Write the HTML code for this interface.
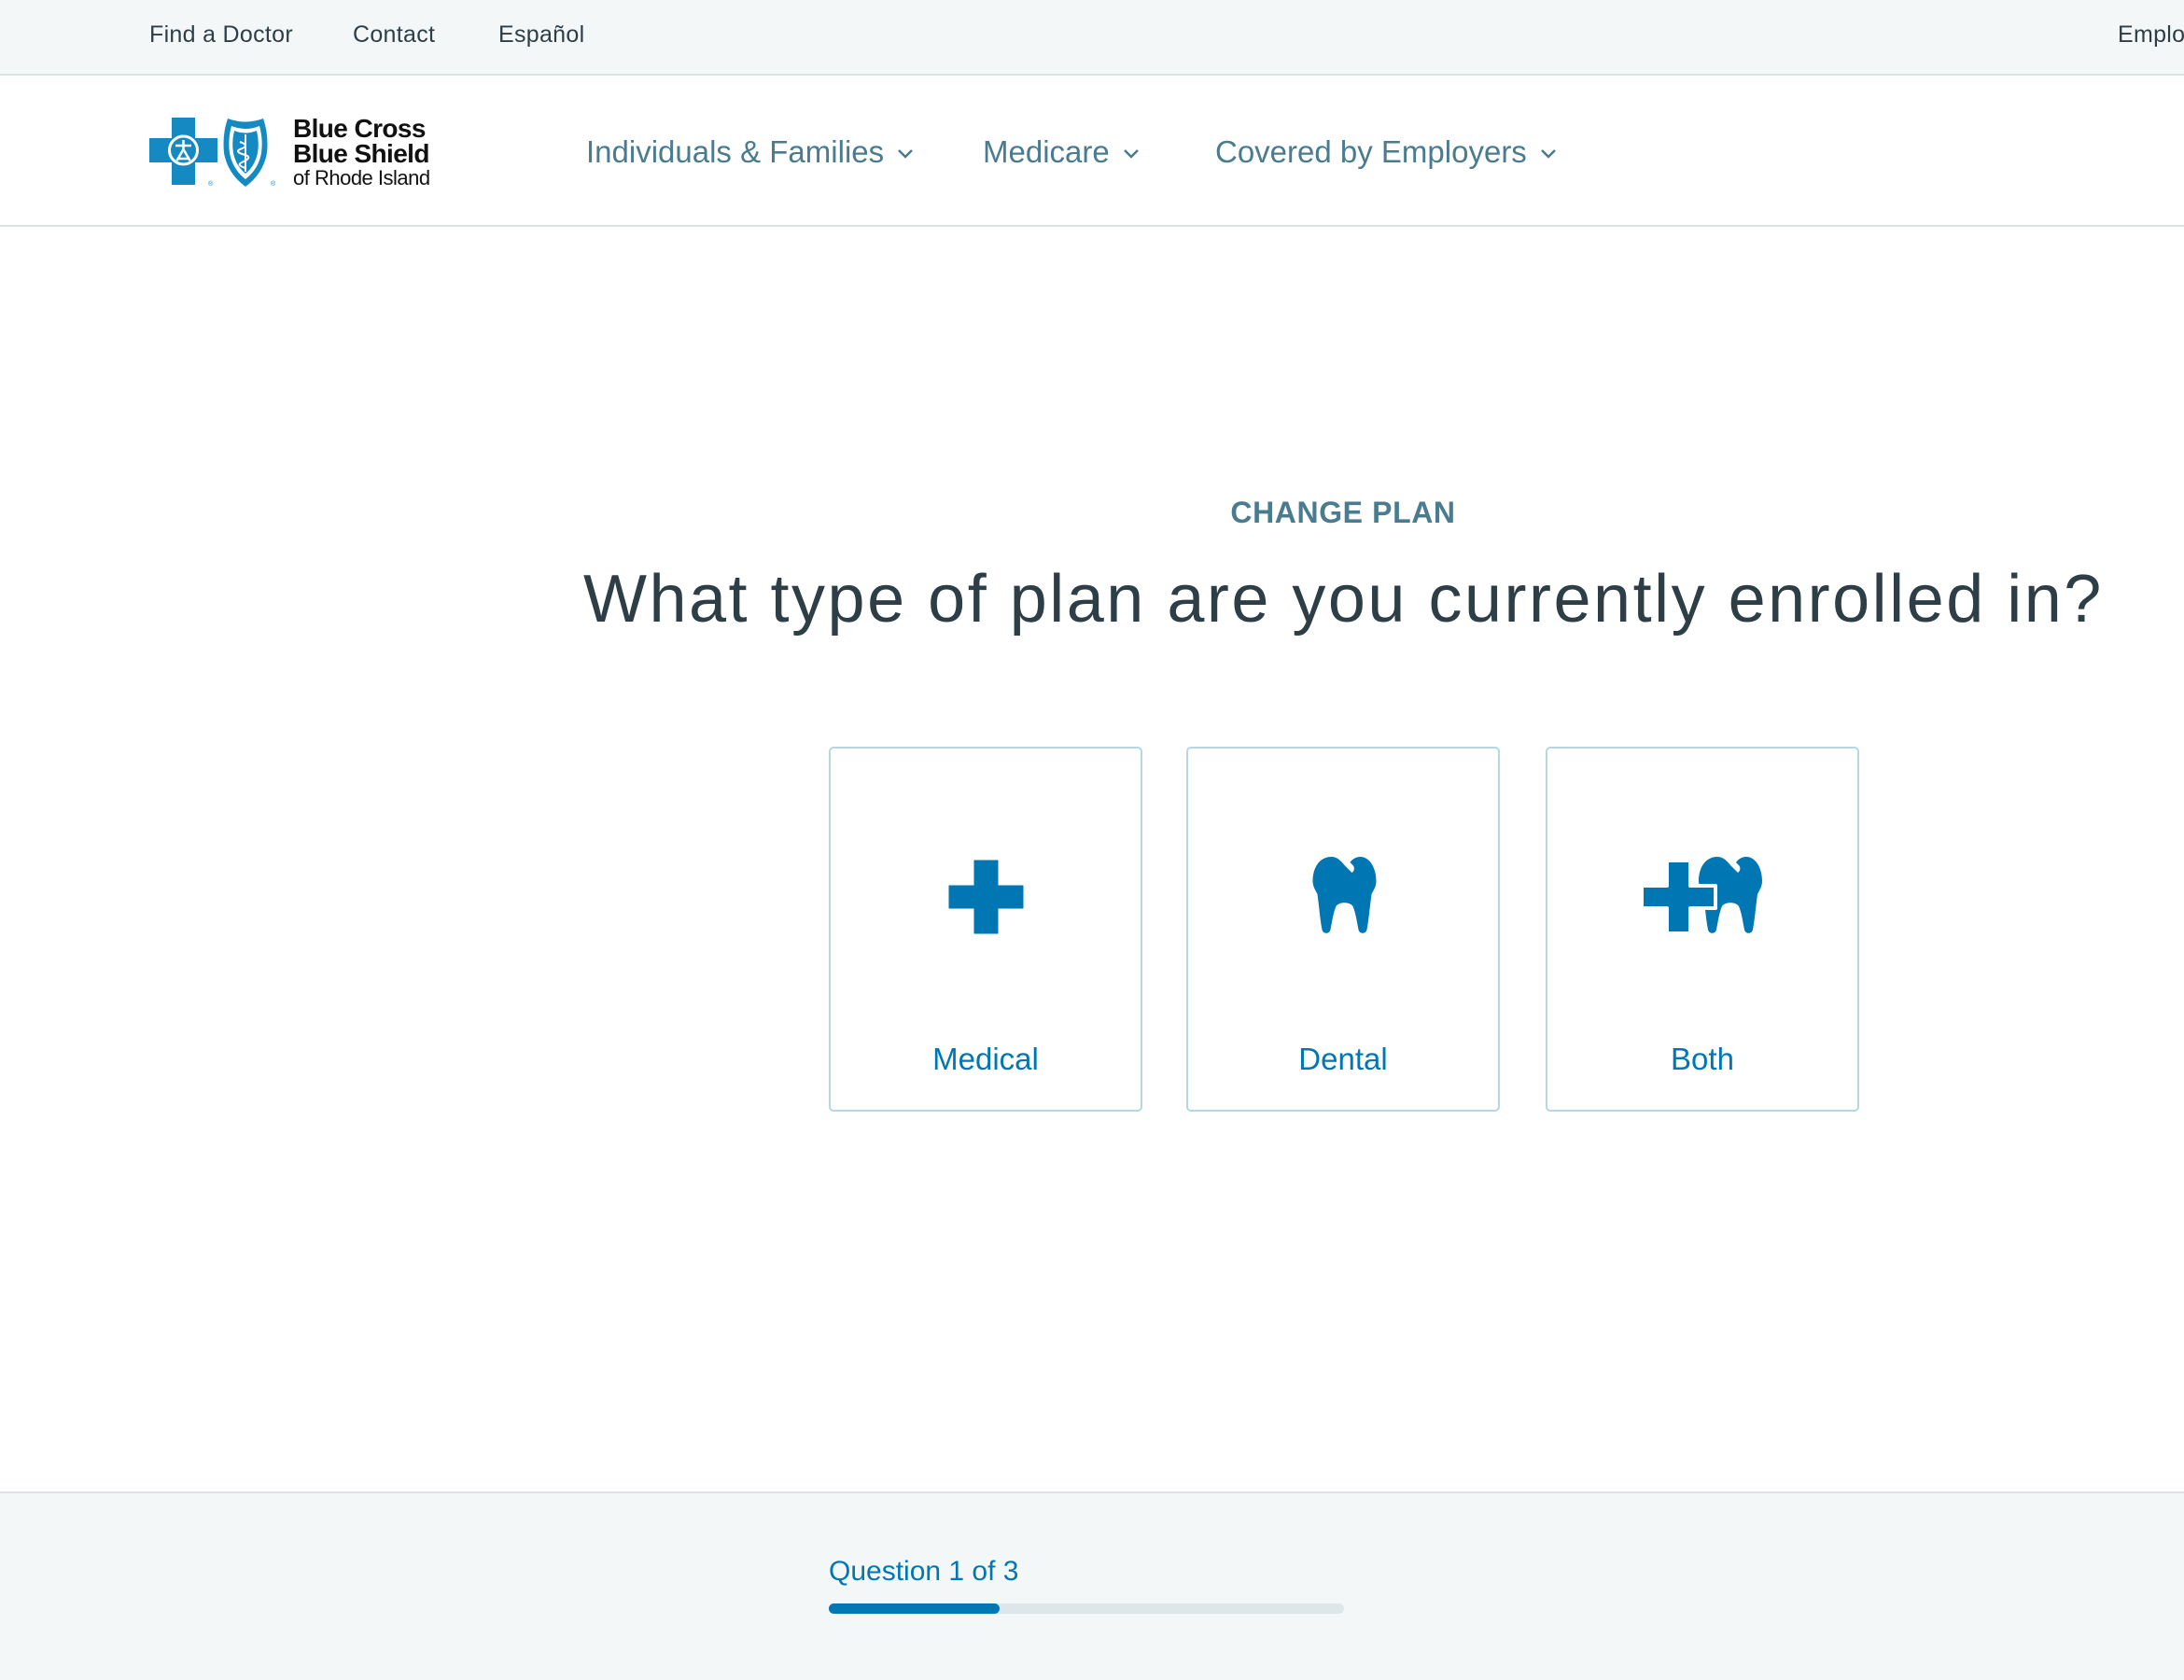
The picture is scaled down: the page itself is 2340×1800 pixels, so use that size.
<!DOCTYPE html>
<html><head><meta charset="utf-8">
<style>
*{margin:0;padding:0;box-sizing:border-box}
html,body{width:2340px;height:1800px;overflow:hidden;background:#fff;font-family:"Liberation Sans",sans-serif}
.top{position:absolute;left:0;top:0;width:2340px;height:81px;background:#f4f7f8;border-bottom:2px solid #dbe3e7}
.top span{position:absolute;top:23px;font-size:25px;color:#2d3e47;letter-spacing:0.3px}
.hdr{position:absolute;left:0;top:81px;width:2340px;height:162px;border-bottom:2px solid #dbe3e7}
.nav{position:absolute;top:142px;font-size:33px;color:#4a7b8f;white-space:nowrap}
.nav svg{margin-left:14px;vertical-align:middle}
.eyebrow{position:absolute;left:0;width:2878px;top:531px;text-align:center;font-size:32px;font-weight:bold;letter-spacing:0.6px;color:#4a7b8f}
h1{position:absolute;left:625px;top:601px;font-size:72px;font-weight:normal;color:#2d3e47;white-space:nowrap;letter-spacing:2.5px}
.card{position:absolute;top:800px;width:336px;height:391px;border:2px solid #b7d6e4;border-radius:5px}
.card .lbl{position:absolute;left:0;right:0;top:314px;text-align:center;font-size:33px;color:#0077b3}
.card svg{position:absolute}
.foot{position:absolute;left:0;top:1598px;width:2340px;height:202px;background:#f4f7f8;border-top:2px solid #dbe3e7}
.q{position:absolute;left:888px;top:1667px;font-size:30px;color:#0077b3}
.track{position:absolute;left:888px;top:1718px;width:552px;height:11px;border-radius:6px;background:#dde6ea}
.fill{position:absolute;left:0;top:0;width:183px;height:11px;border-radius:6px;background:#0077b3}
</style></head><body>
<div class="top">
<span style="left:160px">Find a Doctor</span>
<span style="left:378px">Contact</span>
<span style="left:534px">Español</span>
<span style="left:2269px">Employers</span>
</div>
<div class="hdr">
<svg style="position:absolute;left:160px;top:43px" width="310" height="80" viewBox="0 0 310 80">
 <path d="M24,2h25v22h24v26h-24v24h-25v-24h-24v-26h24z" fill="#1589c2"/>
 <circle cx="36.5" cy="37" r="15" fill="none" stroke="#fff" stroke-width="3"/>
 <path d="M28,32h17M36.5,26v10M36.5,36l-7,12M36.5,36l7,12M30,46h13" stroke="#fff" stroke-width="2.5" fill="none"/>
 <text x="63" y="75" font-size="7" fill="#1589c2" font-family="Liberation Sans">®</text>
 <path d="M84,3 Q103,10 122,3 Q128,20 126,40 Q122,62 103,76 Q84,62 80,40 Q78,20 84,3z" fill="#1589c2"/>
 <path d="M88,11 Q103,17 118,11 Q122,25 120,40 Q117,57 103,68 Q89,57 86,40 Q84,25 88,11z" fill="#fff"/>
 <path d="M91,16 Q103,21 115,16 Q118,28 116,40 Q113,54 103,62 Q93,54 90,40 Q88,28 91,16z" fill="#1589c2"/>
 <path d="M103,20v40M97,28q12,4 0,8q-6,3 6,6q8,3 -4,8q-6,3 4,6" stroke="#fff" stroke-width="2" fill="none"/>
 <text x="130" y="75" font-size="7" fill="#1589c2" font-family="Liberation Sans">®</text>
 <text x="154" y="23" font-size="28" font-weight="bold" fill="#111" font-family="Liberation Sans" letter-spacing="-0.6">Blue Cross</text>
 <text x="154" y="50" font-size="28" font-weight="bold" fill="#111" font-family="Liberation Sans" letter-spacing="-0.6">Blue Shield</text>
 <text x="154" y="74" font-size="22" fill="#111" font-family="Liberation Sans" letter-spacing="-0.5">of Rhode Island</text>
</svg>
<div class="nav" style="left:628px;top:63px">Individuals &amp; Families<svg width="18" height="12" viewBox="0 0 18 12"><path d="M2,2l7,7l7,-7" stroke="#4a7b8f" stroke-width="2.5" fill="none"/></svg></div>
<div class="nav" style="left:1053px;top:63px">Medicare<svg width="18" height="12" viewBox="0 0 18 12"><path d="M2,2l7,7l7,-7" stroke="#4a7b8f" stroke-width="2.5" fill="none"/></svg></div>
<div class="nav" style="left:1302px;top:63px">Covered by Employers<svg width="18" height="12" viewBox="0 0 18 12"><path d="M2,2l7,7l7,-7" stroke="#4a7b8f" stroke-width="2.5" fill="none"/></svg></div>
</div>

<div class="eyebrow">CHANGE PLAN</div>
<h1>What type of plan are you currently enrolled in?</h1>

<div class="card" style="left:888px">
<svg style="left:126px;top:119px" width="81" height="80" viewBox="0 0 81 80"><path d="M28,1h25v27h27v24h-27v27h-25v-27h-27v-24h27z" fill="#0077b3" stroke="#0077b3" stroke-width="1" stroke-linejoin="round"/></svg>
<div class="lbl">Medical</div></div>

<div class="card" style="left:1271px">
<svg style="left:131px;top:116px" width="73" height="84" viewBox="0 0 72 84"><path d="M22,0 C9,0 2,12 2,26 C2,32 5,36 7,40 C9,55 10,68 12,78 C13,83 20,83 21,78 C23,68 24,60 27,53 C30,48 42,48 45,53 C48,60 49,68 51,78 C52,83 59,83 60,78 C62,68 63,55 65,40 C67,36 70,32 70,26 C70,12 63,0 53,0 C48,0 44,3 42,6 L45,9 C47,11 47,15 44,17 L36,9 C32,4 28,0 22,0 Z" fill="#0077b3"/></svg>
<div class="lbl">Dental</div></div>

<div class="card" style="left:1656px">
<svg style="left:100px;top:116px" width="160" height="86" viewBox="0 0 160 86"><g transform="translate(20,0)"><path d="M62,0 C49,0 42,12 42,26 C42,32 45,36 47,40 C49,55 50,68 52,78 C53,83 60,83 61,78 C63,68 64,60 67,53 C70,48 82,48 85,53 C88,60 89,68 91,78 C92,83 99,83 100,78 C102,68 103,55 105,40 C107,36 110,32 110,26 C110,12 103,0 93,0 C88,0 84,3 82,6 L85,9 C87,11 87,15 84,17 L76,9 C72,4 68,0 62,0 Z" fill="#0077b3"/></g>
<path d="M28,4h25v27h27v24h-27v27h-25v-27h-27v-24h27z" fill="#0077b3" stroke="#fff" stroke-width="4" stroke-linejoin="round"/></svg>
<div class="lbl">Both</div></div>

<div class="foot"></div>
<div class="q">Question 1 of 3</div>
<div class="track"><div class="fill"></div></div>
</body></html>
